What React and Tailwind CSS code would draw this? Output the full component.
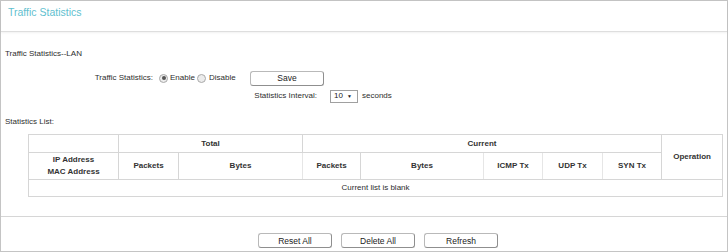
import React from "react";

const Btn = ({ children }) => (
  <button className="w-[74px] h-[15px] border border-[#b9b9b9] border-r-[#8f8f8f] border-b-[#8f8f8f] rounded-[3px] bg-white text-[8.5px] leading-[10px] text-[#222] flex items-center justify-center">
    {children}
  </button>
);

const Radio = ({ checked }) => (
  <span className="w-[9px] h-[9px] rounded-full border border-[#a9a9a9] bg-[#ececec] flex items-center justify-center">
    {checked && <span className="w-[4px] h-[4px] rounded-full bg-[#555]" />}
  </span>
);

export default function App() {
  const th = "border border-[#d6d6d6] font-bold text-[#333] text-center align-middle p-0";
  const thi = "border border-[#d6d6d6] border-l-[#e6e6e6] border-r-[#e6e6e6] font-bold text-[#333] text-center align-middle p-0";
  return (
    <div
      className="w-[728px] h-[252px] bg-white border border-[#c4c4c4] text-[8px] leading-[10px] text-[#2e2e2e] flex flex-col"
      style={{ fontFamily: '"Liberation Sans", Arial, sans-serif' }}
    >
      <div className="h-[31px] shrink-0 pt-[5px] pl-[7px] text-[10.5px] leading-[12px] text-[#5fbfcf] border-b border-[#dedede] shadow-[0_1px_2px_rgba(0,0,0,0.06)]">
        Traffic Statistics
      </div>
      <div className="pl-[4px] mt-[17px]">Traffic Statistics--LAN</div>
      <div className="flex items-center h-[14px] mt-[12px]">
        <span className="w-[152px] text-right">Traffic Statistics:</span>
        <span className="w-[97px] pl-[6px] flex items-center">
          <Radio checked />
          <span className="ml-[2px]">Enable</span>
          <span className="ml-[2px]"><Radio /></span>
          <span className="ml-[3px]">Disable</span>
        </span>
        <Btn>Save</Btn>
      </div>
      <div className="flex items-center h-[14px] mt-[4px]">
        <span className="w-[316px] text-right">Statistics Interval:</span>
        <span className="ml-[13px] w-[28px] h-[13px] border border-[#a0a0a0] flex items-center pl-[3px] text-[#222]">
          10<span className="ml-[4px] text-[5px] leading-[5px]">▼</span>
        </span>
        <span className="ml-[4px]">seconds</span>
      </div>
      <div className="pl-[4px] mt-[14px]">Statistics List:</div>
      <div className="pl-[27px] mt-[7px]">
        <table className="w-[694px] border-collapse table-fixed text-[8px] leading-[12px]">
          <colgroup>
            <col className="w-[90px]" />
            <col className="w-[60px]" />
            <col className="w-[124px]" />
            <col className="w-[58px]" />
            <col className="w-[123px]" />
            <col className="w-[59px]" />
            <col className="w-[60px]" />
            <col className="w-[59px]" />
            <col className="w-[61px]" />
          </colgroup>
          <tbody>
            <tr className="h-[18px]">
              <td className={th}></td>
              <td className={th} colSpan={2}>Total</td>
              <td className={th} colSpan={5}>Current</td>
              <td className={th} rowSpan={2}>Operation</td>
            </tr>
            <tr className="h-[27px]">
              <td className={th}>IP Address<br />MAC Address</td>
              <td className={th}>Packets</td>
              <td className={thi}>Bytes</td>
              <td className={th}>Packets</td>
              <td className={thi}>Bytes</td>
              <td className={thi}>ICMP Tx</td>
              <td className={thi}>UDP Tx</td>
              <td className={th}>SYN Tx</td>
            </tr>
            <tr className="h-[17px]">
              <td colSpan={9} className="border border-[#d6d6d6] text-center p-0">Current list is blank</td>
            </tr>
          </tbody>
        </table>
      </div>
      <div className="mt-[19px] border-t border-[#d6d6d6]" />
      <div className="flex justify-center gap-[9px] mt-[16px] pl-[28px]">
        <Btn>Reset All</Btn>
        <Btn>Delete All</Btn>
        <Btn>Refresh</Btn>
      </div>
    </div>
  );
}
